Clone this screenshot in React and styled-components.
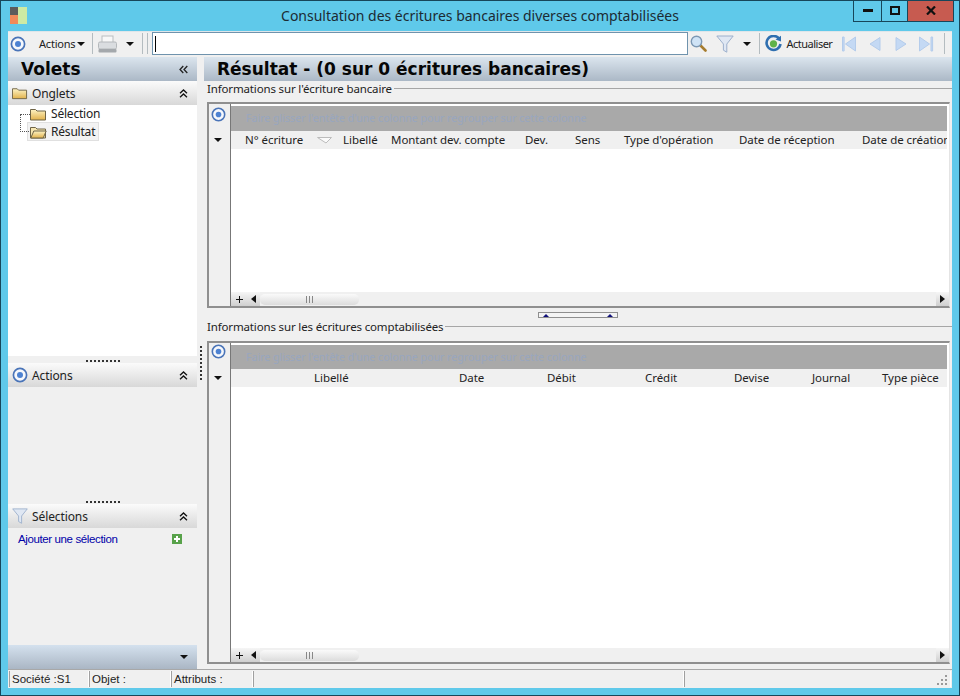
import styled, { createGlobalStyle } from "styled-components"

const GlobalStyle = createGlobalStyle`
    html, body { margin: 0; padding: 0; background: #5fc9ea; }
    body { font-family: "Noto Sans", "DejaVu Sans", sans-serif; font-size: 12px; color: #1b1b1b; }
    * { box-sizing: border-box; }
    svg { flex: none; }
`

const Window = styled.div`
    width: 960px;
    height: 696px;
    background: #5fc9ea;
    border: 1px solid #17465a;
    display: flex;
    flex-direction: column;
    overflow: hidden;
`
const TitleBar = styled.div`
    height: 30px;
    flex: none;
    display: grid;
    grid-template-columns: 1fr auto 1fr;
    align-items: start;
    padding: 0 9px;
`
const AppLogo = styled.svg`
    margin-top: 6px;
    display: block;
`
const Title = styled.div`
    font-size: 14px;
    letter-spacing: -0.02px;
    line-height: 30px;
    color: #1c2b33;
`
const WinControls = styled.div`
    justify-self: end;
    display: flex;
    margin: -1px -4px 0 0;
    height: 22px;
    border: 1px solid #17465a;
    border-top: 0;
`
const WinButton = styled.div`
    width: ${(p) => p.$w}px;
    background: ${(p) => (p.$close ? "#c75b50" : "transparent")};
    border-right: ${(p) => (p.$close ? "0" : "1px solid #17465a")};
    display: flex;
    align-items: center;
    justify-content: center;
`
const Client = styled.div`
    flex: 1;
    margin: 0 7px 7px;
    background: #f0f0f0;
    display: flex;
    flex-direction: column;
    min-height: 0;
`
const Toolbar = styled.div`
    height: 26px;
    flex: none;
    display: flex;
    align-items: center;
    padding: 0 0 2px 2px;
    border-top: 1px solid #dfe6ea;
`
const ToolItem = styled.div`
    display: flex;
    align-items: center;
    flex: none;
    margin-left: ${(p) => p.$ml || 0}px;
    font-size: 11px;
    letter-spacing: ${(p) => p.$ls || -0.2}px;
    color: #222;
`
const ToolSep = styled.div`
    width: 1px;
    height: 21px;
    flex: none;
    background: #b4bcc0;
    margin-left: ${(p) => p.$ml || 0}px;
`
const SearchBox = styled.div`
    width: 536px;
    height: 23px;
    flex: none;
    margin-left: 4px;
    background: #fff;
    border: 1px solid #6f93ad;
    display: flex;
    align-items: center;
    padding-left: 2px;
`
const Caret = styled.div`
    width: 1px;
    height: 16px;
    background: #000;
`
const Main = styled.div`
    flex: 1;
    display: flex;
    min-height: 0;
`
const Sidebar = styled.div`
    width: 189px;
    flex: none;
    display: flex;
    flex-direction: column;
`
const BigHeader = styled.div`
    height: 24px;
    flex: none;
    display: flex;
    align-items: center;
    justify-content: space-between;
    padding: 0 9px 0 13px;
    background: linear-gradient(#dbe5ee, #abb8c6);
    font-family: "DejaVu Sans", sans-serif;
    font-weight: 700;
    font-size: 17px;
    color: #060606;
`
const SectionHeader = styled.div`
    height: 24px;
    flex: none;
    display: flex;
    align-items: center;
    gap: 4px;
    padding: 0 9px 0 4px;
    background: linear-gradient(#fbfbfb, #d8d8d8);
    font-size: 12px;
    letter-spacing: -0.1px;
    color: #222;
`
const SectionTitle = styled.span`
    flex: 1;
`
const TreePane = styled.div`
    flex: 1;
    background: #fff;
    position: relative;
    display: flex;
    flex-direction: column;
    gap: 1px;
    padding: 0 0 0 20px;
`
const TreeRow = styled.div`
    display: flex;
    align-items: center;
    gap: 4px;
    height: 17px;
    width: 70px;
    padding-left: 2px;
    font-size: 12px;
    letter-spacing: -0.2px;
    white-space: nowrap;
    color: #222;
    background: ${(p) => (p.$selected ? "#f3f3f3" : "transparent")};
    outline: ${(p) => (p.$selected ? "1px solid #e0e0e0" : "0")};
`
const TreeLines = styled.div`
    position: absolute;
    left: 12px;
    top: 9px;
    width: 9px;
    height: 18px;
    border-left: 1px dotted #555;
    border-bottom: 1px dotted #555;
    &::before {
        content: "";
        position: absolute;
        left: 0;
        top: 0;
        width: 9px;
        border-top: 1px dotted #555;
    }
`
const Grip = styled.div`
    height: 7px;
    flex: none;
    display: flex;
    justify-content: center;
    align-items: center;
    padding-top: 2px;
    background: #f0f0f0;
    &::after {
        content: "";
        width: 34px;
        height: 2px;
        background: repeating-linear-gradient(90deg, #333 0 2px, transparent 2px 4px);
    }
`
const ActionsPane = styled.div`
    height: 110px;
    flex: none;
`
const SelectionPane = styled.div`
    height: 117px;
    flex: none;
    padding: 3px 15px 0 10px;
    display: flex;
    align-items: flex-start;
    justify-content: space-between;
`
const AddLink = styled.a`
    color: #0000a8;
    font-family: "Liberation Sans", sans-serif;
    font-size: 11.5px;
    letter-spacing: -0.38px;
    line-height: 16px;
`
const AddIcon = styled.svg`
    margin-top: 3px;
`
const SideFooter = styled.div`
    height: 24px;
    flex: none;
    display: flex;
    align-items: center;
    justify-content: flex-end;
    padding-right: 9px;
    background: linear-gradient(#d4e1ee, #aab6c4);
`
const VSplitter = styled.div`
    width: 7px;
    flex: none;
    position: relative;
    &::after {
        content: "";
        position: absolute;
        left: 3px;
        top: 289px;
        width: 2px;
        height: 34px;
        background: repeating-linear-gradient(#333 0 2px, transparent 2px 4px);
    }
`
const Content = styled.div`
    flex: 1;
    min-width: 0;
    display: flex;
    flex-direction: column;
`
const GroupLabel = styled.div`
    height: ${(p) => p.$h}px;
    flex: none;
    display: flex;
    align-items: flex-start;
    gap: 2px;
    margin-left: 3px;
    font-size: 11.5px;
    letter-spacing: -0.15px;
    line-height: 15px;
    color: #222;
    white-space: nowrap;
    &::after {
        content: "";
        flex: 1;
        height: 1px;
        margin-top: 7px;
        background: #a6a6a6;
    }
`
const GridFrame = styled.div`
    height: ${(p) => p.$h}px;
    flex: none;
    margin: 0 2px 0 3px;
    border: 2px solid #8f8f8f;
    border-right: 1px solid #e4e4e4;
    display: flex;
    overflow: hidden;
`
const GridGutter = styled.div`
    width: 22px;
    flex: none;
    border-right: 1px solid #777;
    display: flex;
    flex-direction: column;
    align-items: center;
    padding: ${(p) => p.$top}px 3px 0 0;
    gap: ${(p) => p.$gap}px;
    background: #f0f0f0;
`
const GridBody = styled.div`
    flex: 1;
    min-width: 0;
    display: flex;
    flex-direction: column;
    background: #fff;
`
const GroupBar = styled.div`
    height: ${(p) => p.$h}px;
    flex: none;
    margin: 2px 2px 0 0;
    padding-left: 15px;
    background: #a9a9a9;
    color: #98a6bf;
    font-size: 10.6px;
    line-height: ${(p) => p.$h}px;
    white-space: nowrap;
    overflow: hidden;
`
const HeaderRow = styled.div`
    height: 18px;
    flex: none;
    display: flex;
    margin-right: 2px;
    background: #f0f0f0;
    overflow: hidden;
`
const HeaderCell = styled.div`
    width: ${(p) => p.$w}px;
    flex: none;
    padding-left: ${(p) => p.$pl || 0}px;
    font-size: 11.5px;
    letter-spacing: -0.05px;
    line-height: 18px;
    color: #222;
    white-space: nowrap;
`
const Rows = styled.div`
    flex: 1;
`
const ScrollRow = styled.div`
    height: 14px;
    flex: none;
    display: flex;
    align-items: center;
    background: #f0f0f0;
`
const PlusButton = styled.div`
    width: 16px;
    height: 14px;
    flex: none;
    display: flex;
    align-items: center;
    justify-content: center;
    background: linear-gradient(#f6f6f6, #cfcfcf);
`
const ScrollArrow = styled.div`
    width: 13px;
    height: 14px;
    flex: none;
    display: flex;
    align-items: center;
    justify-content: center;
    background: linear-gradient(#f6f6f6, #cfcfcf);
    margin-left: ${(p) => (p.$end ? "auto" : "0")};
`
const ScrollThumb = styled.div`
    width: 99px;
    height: 11px;
    flex: none;
    border-radius: 5px;
    background: linear-gradient(#fafafa, #dcdcdc);
    display: flex;
    align-items: center;
    justify-content: center;
    &::after {
        content: "";
        width: 7px;
        height: 7px;
        background: repeating-linear-gradient(90deg, #888 0 1px, transparent 1px 3px);
    }
`
const HSplitter = styled.div`
    height: 11px;
    flex: none;
    display: flex;
    align-items: center;
    justify-content: center;
    padding-top: 3px;
`
const SplitHandle = styled.div`
    width: 80px;
    height: 6px;
    border: 1px solid #8e8e8e;
    background: #f4f4f4;
    display: flex;
    justify-content: space-between;
    align-items: center;
    padding: 0 4px;
`
const Pip = styled.div`
    width: 0;
    height: 0;
    border-left: 3px solid transparent;
    border-right: 3px solid transparent;
    border-bottom: 3px solid #10107a;
`
const StatusBar = styled.div`
    height: 19px;
    flex: none;
    display: flex;
    align-items: stretch;
    padding: 1px;
    border-top: 1px solid #a8a8a8;
`
const StatusCell = styled.div`
    width: ${(p) => p.$w}px;
    flex: ${(p) => (p.$w ? "none" : 1)};
    border-left: 1px solid #a0a0a0;
    border-right: 1px solid #fff;
    padding-left: 2px;
    font-family: "Liberation Sans", sans-serif;
    font-size: 11.5px;
    line-height: 16px;
    color: #222;
    position: relative;
`
const ResizeGrip = styled.svg`
    position: absolute;
    right: 2px;
    bottom: 1px;
`

function TargetIcon({ size = 16 }) {
    return (
        <svg width={size} height={size} viewBox="0 0 16 16">
            <circle cx="8" cy="8" r="6.6" fill="#f6f8fc" stroke="#4a74b8" strokeWidth="1.7" />
            <circle cx="8" cy="8" r="3" fill="#4d82d2" />
        </svg>
    )
}

function DownCaret({ w = 8 }) {
    return (
        <svg width={w} height="4" viewBox="0 0 8 4">
            <path d="M0 0h8L4 4z" fill="#111" />
        </svg>
    )
}

function Folder({ open, w = 17 }) {
    return (
        <svg width={w} height="14" viewBox="0 0 17 14">
            <defs>
                <linearGradient id="fold" x1="0" y1="0" x2="0" y2="1">
                    <stop offset="0" stopColor="#fdf3c4" />
                    <stop offset="1" stopColor="#e2b24c" />
                </linearGradient>
            </defs>
            <path d="M.5 13V2.5h5l1.5 1.5h8.5v9z" fill={open ? "#f6e6b0" : "url(#fold)"} stroke="#6f6446" />
            {open && <path d="M.8 13l3-7h12.4l-3 7z" fill="url(#fold)" stroke="#6f6446" />}
        </svg>
    )
}

function DoubleUp() {
    return (
        <svg width="9" height="9" viewBox="0 0 9 9" fill="none" stroke="#111" strokeWidth="1.3">
            <path d="M1 4.3l3.5-3.3L8 4.3M1 8.3L4.5 5 8 8.3" />
        </svg>
    )
}

function DoubleLeft() {
    return (
        <svg width="9" height="9" viewBox="0 0 9 9" fill="none" stroke="#222" strokeWidth="1.3">
            <path d="M4.3 1L1 4.5 4.3 8M8.3 1L5 4.5 8.3 8" />
        </svg>
    )
}

function Funnel({ size = 18 }) {
    return (
        <svg width={size} height={size} viewBox="0 0 18 18">
            <path d="M.8 1h16.4L10.8 9v8.2l-3.4-2V9z" fill="#dfe7f3" stroke="#9db0cc" />
        </svg>
    )
}

function Printer() {
    return (
        <svg width="19" height="18" viewBox="0 0 19 18">
            <rect x="4" y="1" width="11" height="7" fill="#f8f8f8" stroke="#b9bdc0" />
            <rect x=".5" y="7" width="18" height="7" rx="1.5" fill="#dadde0" stroke="#b4b8bb" />
            <rect x=".5" y="14" width="18" height="3.5" rx="1" fill="#a4a8ac" />
        </svg>
    )
}

function Magnifier() {
    return (
        <svg width="17" height="17" viewBox="0 0 17 17">
            <path d="M10 10l5.5 5.5" stroke="#a67c2e" strokeWidth="2.6" strokeLinecap="round" />
            <circle cx="6.5" cy="6.5" r="5.2" fill="#cfe3f6" stroke="#7c98b4" strokeWidth="1.4" />
        </svg>
    )
}

function Refresh() {
    return (
        <svg width="17" height="17" viewBox="0 0 17 17">
            <path d="M14 3.5A7 7 0 1 0 15.5 9" fill="none" stroke="#2f6fb0" strokeWidth="2.6" />
            <path d="M10.5 4.5L16 .8v5.7z" fill="#2f6fb0" />
            <circle cx="8.5" cy="8.8" r="3.6" fill="#5fb24a" />
        </svg>
    )
}

function NavIcon({ kind }) {
    const shapes = {
        first: "M14.5 1v14L4.5 8z M1.5 1h1.6v14H1.5z",
        prev: "M13 1.5v13L3 8z",
        next: "M3 1.5v13L13 8z",
        last: "M1.5 1v14l10-7z M13 1h1.6v14H13z",
    }
    return (
        <svg width="16" height="16" viewBox="0 0 16 16">
            <path d={shapes[kind]} fill="#c4d9f4" stroke="#b4cceb" strokeWidth="1" />
        </svg>
    )
}

function GridPanel({ height, barHeight, gutterTop, gutterGap, columns }) {
    return (
        <GridFrame $h={height}>
            <GridGutter $top={gutterTop} $gap={gutterGap}>
                <TargetIcon size={15} />
                <DownCaret />
            </GridGutter>
            <GridBody>
                <GroupBar $h={barHeight}>Faire glisser l'entête d'une colonne pour regrouper sur cette colonne</GroupBar>
                <HeaderRow>
                    {columns.map((col, i) => (
                        <HeaderCell key={i} $w={col.w} $pl={col.pl}>
                            {col.sortIcon ? (
                                <svg width="15" height="7" viewBox="0 0 15 7">
                                    <path d="M.5.5h14L9 6z" fill="#fafafa" stroke="#bcbcbc" />
                                </svg>
                            ) : (
                                col.label
                            )}
                        </HeaderCell>
                    ))}
                </HeaderRow>
                <Rows />
                <ScrollRow>
                    <PlusButton>
                        <svg width="7" height="7" viewBox="0 0 7 7"><path d="M3.5 0v7M0 3.5h7" stroke="#111" /></svg>
                    </PlusButton>
                    <ScrollArrow>
                        <svg width="5" height="8" viewBox="0 0 5 8"><path d="M5 0v8L0 4z" fill="#111" /></svg>
                    </ScrollArrow>
                    <ScrollThumb />
                    <ScrollArrow $end>
                        <svg width="5" height="8" viewBox="0 0 5 8"><path d="M0 0v8l5-4z" fill="#111" /></svg>
                    </ScrollArrow>
                </ScrollRow>
            </GridBody>
        </GridFrame>
    )
}

const bankColumns = [
    { label: "N° écriture", w: 86, pl: 14 },
    { sortIcon: true, w: 26 },
    { label: "Libellé", w: 48 },
    { label: "Montant dev. compte", w: 134 },
    { label: "Dev.", w: 50 },
    { label: "Sens", w: 49 },
    { label: "Type d'opération", w: 115 },
    { label: "Date de réception", w: 123 },
    { label: "Date de création", w: 100 },
]

const accountColumns = [
    { label: "Libellé", w: 228, pl: 83 },
    { label: "Date", w: 88 },
    { label: "Débit", w: 98 },
    { label: "Crédit", w: 89 },
    { label: "Devise", w: 78 },
    { label: "Journal", w: 70 },
    { label: "Type pièce", w: 70 },
]

export default function App() {
    return (
        <Window>
            <GlobalStyle />
            <TitleBar>
                <AppLogo width="17" height="17" viewBox="0 0 17 17">
                    <rect x="0" y="0" width="8" height="8" fill="#5c5c5c" />
                    <rect x="0" y="8" width="8" height="9" fill="#f08a5a" />
                    <rect x="8" y="0" width="9" height="17" fill="#cdeaa4" />
                </AppLogo>
                <Title>Consultation des écritures bancaires diverses comptabilisées</Title>
                <WinControls>
                    <WinButton $w={28}>
                        <svg width="10" height="3" viewBox="0 0 10 3"><rect width="10" height="3" fill="#111" /></svg>
                    </WinButton>
                    <WinButton $w={26}>
                        <svg width="10" height="9" viewBox="0 0 10 9"><rect x="1" y="1" width="8" height="7" fill="none" stroke="#111" strokeWidth="2" /></svg>
                    </WinButton>
                    <WinButton $w={45} $close>
                        <svg width="10" height="9" viewBox="0 0 10 9"><path d="M1 0.5l8 8M9 0.5l-8 8" stroke="#111" strokeWidth="2.2" /></svg>
                    </WinButton>
                </WinControls>
            </TitleBar>
            <Client>
                <Toolbar>
                    <ToolItem><TargetIcon /></ToolItem>
                    <ToolItem $ml={13}>Actions</ToolItem>
                    <ToolItem $ml={2}><DownCaret /></ToolItem>
                    <ToolSep $ml={7} />
                    <ToolItem $ml={5}><Printer /></ToolItem>
                    <ToolItem $ml={9}><DownCaret /></ToolItem>
                    <ToolSep $ml={8} />
                    <ToolSep $ml={4} />
                    <SearchBox><Caret /></SearchBox>
                    <ToolItem $ml={2}><Magnifier /></ToolItem>
                    <ToolItem $ml={9}><Funnel /></ToolItem>
                    <ToolItem $ml={9}><DownCaret /></ToolItem>
                    <ToolSep $ml={8} />
                    <ToolItem $ml={5}><Refresh /></ToolItem>
                    <ToolItem $ml={4} $ls={-0.5}>Actualiser</ToolItem>
                    <ToolItem $ml={9}><NavIcon kind="first" /></ToolItem>
                    <ToolItem $ml={10}><NavIcon kind="prev" /></ToolItem>
                    <ToolItem $ml={10}><NavIcon kind="next" /></ToolItem>
                    <ToolItem $ml={9}><NavIcon kind="last" /></ToolItem>
                    <ToolSep $ml={10} />
                </Toolbar>
                <Main>
                    <Sidebar>
                        <BigHeader>
                            Volets
                            <DoubleLeft />
                        </BigHeader>
                        <SectionHeader>
                            <Folder w={16} />
                            <SectionTitle>Onglets</SectionTitle>
                            <DoubleUp />
                        </SectionHeader>
                        <TreePane>
                            <TreeLines />
                            <TreeRow><Folder />Sélection</TreeRow>
                            <TreeRow $selected><Folder open />Résultat</TreeRow>
                        </TreePane>
                        <Grip />
                        <SectionHeader>
                            <TargetIcon />
                            <SectionTitle>Actions</SectionTitle>
                            <DoubleUp />
                        </SectionHeader>
                        <ActionsPane />
                        <Grip />
                        <SectionHeader>
                            <Funnel size={16} />
                            <SectionTitle>Sélections</SectionTitle>
                            <DoubleUp />
                        </SectionHeader>
                        <SelectionPane>
                            <AddLink>Ajouter une sélection</AddLink>
                            <AddIcon width="10" height="10" viewBox="0 0 10 10">
                                <rect width="10" height="10" fill="#58a24a" />
                                <path d="M5 2v6M2 5h6" stroke="#fff" strokeWidth="2" />
                            </AddIcon>
                        </SelectionPane>
                        <SideFooter><DownCaret /></SideFooter>
                    </Sidebar>
                    <VSplitter />
                    <Content>
                        <BigHeader>Résultat - (0 sur 0 écritures bancaires)</BigHeader>
                        <GroupLabel $h={21}>Informations sur l'écriture bancaire</GroupLabel>
                        <GridPanel height={206} barHeight={25} gutterTop={3} gutterGap={16} columns={bankColumns} />
                        <HSplitter>
                            <SplitHandle><Pip /><Pip /></SplitHandle>
                        </HSplitter>
                        <GroupLabel $h={22}>Informations sur les écritures comptabilisées</GroupLabel>
                        <GridPanel height={323} barHeight={24} gutterTop={1} gutterGap={17} columns={accountColumns} />
                    </Content>
                </Main>
                <StatusBar>
                    <StatusCell $w={80}>Société :S1</StatusCell>
                    <StatusCell $w={82}>Objet :</StatusCell>
                    <StatusCell $w={82}>Attributs :</StatusCell>
                    <StatusCell $w={431} />
                    <StatusCell>
                        <ResizeGrip width="11" height="11" viewBox="0 0 11 11" fill="#999">
                            <rect x="8" y="0" width="2" height="2" />
                            <rect x="4" y="4" width="2" height="2" />
                            <rect x="8" y="4" width="2" height="2" />
                            <rect x="0" y="8" width="2" height="2" />
                            <rect x="4" y="8" width="2" height="2" />
                            <rect x="8" y="8" width="2" height="2" />
                        </ResizeGrip>
                    </StatusCell>
                </StatusBar>
            </Client>
        </Window>
    )
}
